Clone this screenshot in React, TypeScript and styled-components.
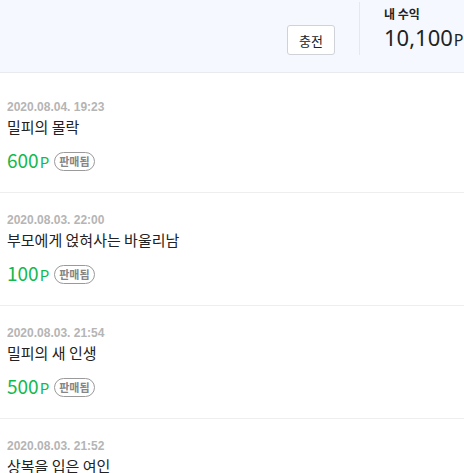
import React from 'react';
import styled, { createGlobalStyle } from 'styled-components';

const GlobalStyle = createGlobalStyle`
  html, body {
    margin: 0;
    padding: 0;
    background: #ffffff;
    overflow: hidden;
  }
  * {
    box-sizing: border-box;
  }
  body {
    font-family: "Noto Sans CJK KR", "Noto Sans", sans-serif;
    color: #222222;
  }
`;

const Page = styled.div`
  width: 464px;
  display: flex;
  flex-direction: column;
`;

const Header = styled.header`
  display: flex;
  justify-content: flex-end;
  align-items: flex-end;
  height: 73px;
  padding: 2px 0 17px;
  background-color: #f5f8ff;
  border-bottom: 1px solid #e8eaee;
`;

const ChargeButton = styled.button`
  width: 48px;
  height: 30px;
  padding: 0;
  border: 1px solid #cfd3d9;
  border-radius: 3px;
  background-color: #ffffff;
  font-family: "Noto Sans CJK KR", sans-serif;
  font-size: 13px;
  color: #222222;
`;

const Divider = styled.div`
  width: 1px;
  height: 53px;
  margin-left: 24px;
  background-color: #e6e8ec;
`;

const Earnings = styled.div`
  display: flex;
  flex-direction: column;
  width: 104px;
  padding-left: 24px;
`;

const EarningsLabel = styled.div`
  font-size: 12px;
  font-weight: 700;
  line-height: 16px;
  color: #222222;
`;

const EarningsAmount = styled.div`
  font-family: "Noto Sans", sans-serif;
  font-size: 22px;
  line-height: 30px;
  color: #222222;
  white-space: nowrap;
`;

const Unit = styled.span<{ $size: number }>`
  font-size: ${p => p.$size}px;
  margin-left: 1px;
`;

const List = styled.ul`
  list-style: none;
  margin: 0;
  padding: 7px 0 0;
`;

const Item = styled.li`
  display: flex;
  flex-direction: column;
  padding: 19px 7px;
  border-bottom: 1px solid #eeeeee;
`;

const DateText = styled.div`
  font-family: "Liberation Sans", Arial, sans-serif;
  font-size: 12px;
  font-weight: 700;
  line-height: 16px;
  color: #b5b5b5;
`;

const Title = styled.div`
  margin-top: 2px;
  font-size: 15px;
  line-height: 20px;
  color: #222222;
`;

const PriceRow = styled.div`
  display: flex;
  align-items: center;
  gap: 5px;
  margin-top: 12px;
  height: 24px;
`;

const Price = styled.div`
  font-family: "Noto Sans CJK KR", sans-serif;
  font-size: 19px;
  line-height: 24px;
  color: #14b84d;
`;

const SoldBadge = styled.span`
  display: inline-flex;
  align-items: center;
  justify-content: center;
  height: 19px;
  padding: 0 4px;
  border: 1px solid #9a9a9a;
  border-radius: 10px;
  font-size: 11px;
  font-weight: 700;
  color: #858585;
`;

const sales = [
  { date: '2020.08.04. 19:23', title: '밀피의 몰락', price: 600 },
  { date: '2020.08.03. 22:00', title: '부모에게 얹혀사는 바울리남', price: 100 },
  { date: '2020.08.03. 21:54', title: '밀피의 새 인생', price: 500 },
  { date: '2020.08.03. 21:52', title: '상복을 입은 여인', price: 300 },
];

function App(): JSX.Element {
  return (
    <Page>
      <GlobalStyle />
      <Header>
        <ChargeButton>충전</ChargeButton>
        <Divider />
        <Earnings>
          <EarningsLabel>내 수익</EarningsLabel>
          <EarningsAmount>
            10,100<Unit $size={16}>P</Unit>
          </EarningsAmount>
        </Earnings>
      </Header>
      <List>
        {sales.map(item => (
          <Item key={item.date}>
            <DateText>{item.date}</DateText>
            <Title>{item.title}</Title>
            <PriceRow>
              <Price>
                {item.price}
                <Unit $size={15}>P</Unit>
              </Price>
              <SoldBadge>판매됨</SoldBadge>
            </PriceRow>
          </Item>
        ))}
      </List>
    </Page>
  );
}

export default App;
